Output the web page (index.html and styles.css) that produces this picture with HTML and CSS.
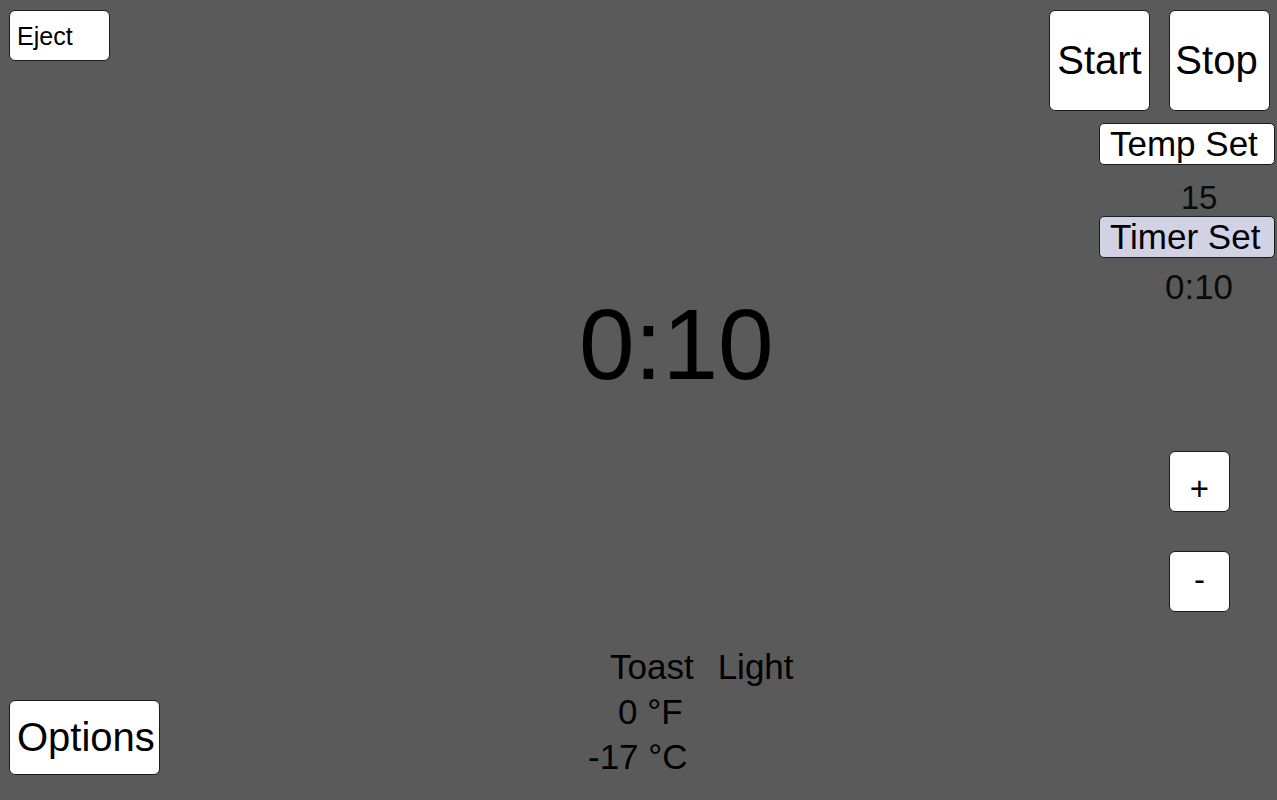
FILE: index.html
```html
<!DOCTYPE html>
<html lang="en">
<head>
<meta charset="utf-8">
<title>Toaster</title>
<link rel="stylesheet" href="styles.css">
</head>
<body>
<div class="app">
  <div class="left">
    <button class="btn btn-left eject">Eject</button>
    <button class="btn btn-left options">Options</button>
  </div>
  <div class="center">
    <div class="timer">0:10</div>
    <div class="info">
      <div class="line line-toast"><span>Toast</span><span class="shade">Light</span></div>
      <div class="line line-f">0 °F</div>
      <div class="line">-17 °C</div>
    </div>
  </div>
  <div class="right">
    <div class="top-row">
      <button class="btn big">Start</button>
      <button class="btn big stop">Stop</button>
    </div>
    <button class="btn btn-left setter">Temp Set</button>
    <div class="setval val-temp">15</div>
    <button class="btn btn-left setter active">Timer Set</button>
    <div class="setval val-timer">0:10</div>
    <button class="btn step plus">+</button>
    <button class="btn step minus">-</button>
  </div>
</div>
</body>
</html>
```

FILE: styles.css
```css
html, body {
  margin: 0;
  padding: 0;
}

body {
  background: #5a5a5a;
  font-family: "Liberation Sans", Arial, sans-serif;
  color: #000;
  overflow: hidden;
}

.app {
  display: flex;
  height: 800px;
  width: 1277px;
}

.btn {
  display: flex;
  align-items: center;
  justify-content: center;
  box-sizing: border-box;
  padding: 0;
  margin: 0;
  border: 1px solid #1c1c1c;
  border-radius: 6px;
  background: #fff;
  color: #000;
  font-family: "Liberation Sans", Arial, sans-serif;
  white-space: nowrap;
  cursor: pointer;
}

.btn-left {
  justify-content: flex-start;
  padding-left: 7px;
}

/* left column */
.left {
  box-sizing: border-box;
  width: 160px;
  flex: none;
  display: flex;
  flex-direction: column;
  justify-content: space-between;
  align-items: flex-start;
  padding: 10px 0 25px 9px;
}

.eject {
  width: 101px;
  height: 51px;
  font-size: 25px;
  padding-top: 2px;
}

.options {
  width: 151px;
  height: 75px;
  font-size: 40px;
}

/* center */
.center {
  flex: 1;
  display: flex;
  flex-direction: column;
}

.timer {
  margin-top: 294px;
  padding-left: 419px;
  font-size: 100px;
  line-height: 100px;
}

.info {
  margin-top: auto;
  padding: 0 0 21px 428px;
  font-size: 35px;
  line-height: 45px;
}

.line {
  white-space: nowrap;
}

.line-toast {
  margin-left: 22px;
}

.line-f {
  margin-left: 30px;
}

.shade {
  margin-left: 24px;
}

/* right column */
.right {
  width: 228px;
  flex: none;
  display: flex;
  flex-direction: column;
  align-items: flex-start;
  padding-top: 10px;
  box-sizing: border-box;
}

.top-row {
  display: flex;
  gap: 19px;
}

.big {
  width: 101px;
  height: 101px;
  font-size: 40px;
}

.stop {
  padding-right: 6px;
}

.setter {
  margin-top: 12px;
  margin-left: 50px;
  width: 176px;
  height: 42px;
  font-size: 35px;
  padding-left: 10px;
  border-radius: 5px;
}

.setter.active {
  background: #d2d2e5;
  margin-top: 0;
}

.setval {
  width: 120px;
  margin-left: 90px;
  text-align: center;
  font-size: 33px;
  line-height: 36px;
  color: #0a0a0a;
}

.val-temp {
  margin-top: 15px;
}

.val-timer {
  margin-top: 11px;
  font-size: 35px;
}

.step {
  margin-left: 120px;
  width: 61px;
  height: 61px;
  font-size: 33px;
}

.plus {
  margin-top: 146px;
  padding-top: 15px;
}

.minus {
  margin-top: 39px;
  padding-bottom: 4px;
}
```
